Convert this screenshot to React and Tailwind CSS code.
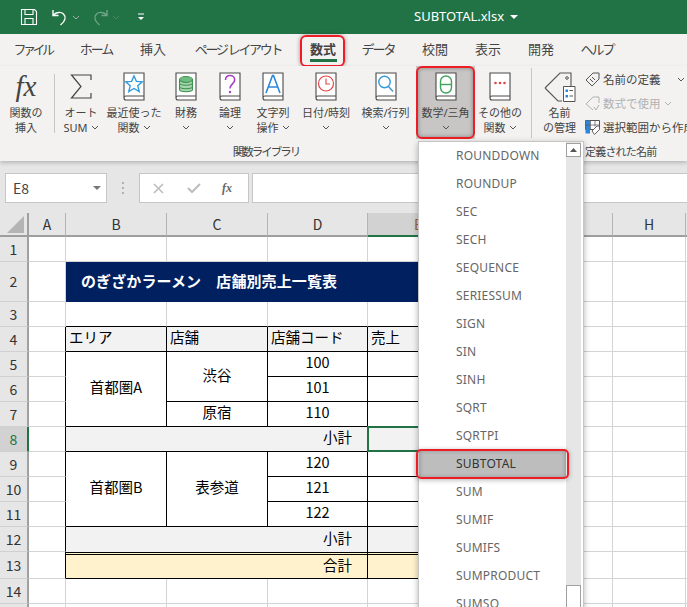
const plain = "border-r border-b border-[#d4d4d4]";
const line = "border-r border-b border-black";
const leftEdge = "border-r border-r-black border-b border-b-[#d4d4d4]";
const topEdge = "border-r border-r-[#d4d4d4] border-b border-b-black";
const jp = "font-['Noto_Sans_CJK_JP',sans-serif]";

const funcs = ["ROUNDDOWN", "ROUNDUP", "SEC", "SECH", "SEQUENCE", "SERIESSUM", "SIGN", "SIN", "SINH", "SQRT", "SQRTPI", "SUBTOTAL", "SUM", "SUMIF", "SUMIFS", "SUMPRODUCT", "SUMSQ"];

function Chevron({ className = "" }) {
    return (
        <svg width="8" height="5" viewBox="0 0 8 5" className={className}>
            <path d="M1 1l3 3 3-3" fill="none" stroke="#555" strokeWidth="1" />
        </svg>
    );
}

function Book({ children }) {
    return (
        <svg width="22" height="29" viewBox="0 0 22 29">
            <path d="M1 26V1h20v27H3a2 2 0 0 1 0-4h18" fill="#fff" stroke="#4a4a4a" strokeWidth="1.1" />
            {children}
        </svg>
    );
}

function RibbonButton({ className = "", icon, lines, chevron }) {
    return (
        <div className={`flex flex-col items-center pt-[6px] h-[73px] shrink-0 text-[11px] leading-[14.5px] text-[#444] ${className}`}>
            <div className="h-[29px] flex items-center justify-center">{icon}</div>
            <div className="mt-[5px] text-center whitespace-nowrap">{lines[0]}</div>
            <div className="flex items-center justify-center h-[14.5px] gap-[3px] whitespace-nowrap">
                {lines[1]}
                {chevron && <Chevron />}
            </div>
        </div>
    );
}

function Tab({ className = "", children }) {
    return <div className={`flex items-center justify-center h-full shrink-0 text-[13px] text-[#444] whitespace-nowrap ${className}`}>{children}</div>;
}

function Cell({ className = plain, children }) {
    return <div className={`flex items-center pb-[3px] text-[14.5px] leading-none text-black whitespace-nowrap ${className}`}>{children}</div>;
}

function ColHead({ active, children }) {
    return (
        <div className={`flex items-center justify-center text-[14px] border-r border-r-[#b4b4b4] border-b-2 ${active ? "bg-[#d2d2d2] text-[#a0622a] border-b-[#217346]" : "bg-[#e6e6e6] text-[#333] border-b-[#9e9e9e]"}`}>
            {children}
        </div>
    );
}

function RowHead({ active, children }) {
    return (
        <div className={`flex items-center justify-center text-[14px] border-b border-b-[#d0d0d0] border-r-2 ${active ? "bg-[#d2d2d2] text-[#217346] border-r-[#217346]" : "bg-[#e6e6e6] text-[#333] border-r-[#a0a0a0]"}`}>
            {children}
        </div>
    );
}

// right of the table only plain gridlines are left
function Rest() {
    return (
        <>
            <Cell />
            <Cell />
            <Cell />
            <Cell />
        </>
    );
}

export default function App() {
    return (
        <div className={`relative w-[687px] h-[607px] overflow-hidden bg-white flex flex-col font-['Noto_Sans','Noto_Sans_CJK_JP',sans-serif]`}>

            {/* title bar */}
            <div className="flex items-center h-[34px] shrink-0 bg-[#217346] text-white">
                <svg width="18" height="18" viewBox="0 0 18 18" className="ml-[20px]">
                    <path d="M1.5 1.5h13l2 2v13h-15z M5 1.5v5h8v-5 M5 16.5v-6h8v6" fill="none" stroke="#fff" strokeWidth="1.1" />
                </svg>
                <svg width="18" height="18" viewBox="0 0 18 18" className="ml-[13px]">
                    <path d="M2 2v5.5h5.5 M2.5 7C5 4 10 3.5 12.5 6c2.8 2.8 2 7-3 11" fill="none" stroke="#fff" strokeWidth="1.4" />
                </svg>
                <Chevron className="ml-[3px] invert" />
                <svg width="18" height="18" viewBox="0 0 18 18" className="ml-[11px] opacity-35">
                    <path d="M16 2v5.5h-5.5 M15.5 7C13 4 8 3.5 5.5 6c-2.8 2.8-2 7 3 11" fill="none" stroke="#fff" strokeWidth="1.4" />
                </svg>
                <Chevron className="ml-[3px] invert opacity-35" />
                <svg width="8" height="8" viewBox="0 0 8 8" className="ml-[17px]">
                    <path d="M1 1h6" stroke="#fff" strokeWidth="1" />
                    <path d="M1 4h6l-3 3z" fill="#fff" />
                </svg>
                <span className="ml-[269px] text-[13px]">SUBTOTAL.xlsx</span>
                <svg width="8" height="5" viewBox="0 0 8 5" className="ml-[6px]">
                    <path d="M0 0h8l-4 4z" fill="#fff" />
                </svg>
            </div>

            {/* tabs */}
            <div className="flex h-[32px] shrink-0 bg-[#f3f2f1]">
                <Tab className="w-[65px] tracking-[-3.5px]">ファイル</Tab>
                <Tab className="w-[62px] tracking-[-2px]">ホーム</Tab>
                <Tab className="w-[52px]">挿入</Tab>
                <Tab className="w-[118px] tracking-[-2.3px]">ページ レイアウト</Tab>
                <Tab className="w-[52px] relative font-bold text-[#333]">
                    数式
                    <div className="absolute left-[13px] top-[25px] w-[27px] h-[3px] bg-[#217346]"></div>
                    <div className="absolute left-[3px] top-px w-[45px] h-[32px] rounded-[6px] border-2 border-[#ee1c25] shadow-[0_0_4px_rgba(0,0,0,0.4)]"></div>
                </Tab>
                <Tab className="w-[58px] tracking-[-2px]">データ</Tab>
                <Tab className="w-[56px]">校閲</Tab>
                <Tab className="w-[50px]">表示</Tab>
                <Tab className="w-[56px]">開発</Tab>
                <Tab className="w-[56px] tracking-[-2px]">ヘルプ</Tab>
            </div>

            {/* ribbon */}
            <div className="flex h-[95px] shrink-0 bg-[#f3f2f1] relative z-10 shadow-[0_2px_4px_rgba(0,0,0,0.2)]">
                <div className="flex flex-col w-[532px] shrink-0">
                    <div className="flex h-[73px]">
                        <RibbonButton
                            className="w-[52px]"
                            icon={<span className="font-['Liberation_Serif',serif] italic text-[29px] leading-none text-[#444]">fx</span>}
                            lines={["関数の", "挿入"]}
                        />
                        <div className="ml-[2px] mt-[8px] w-px h-[59px] bg-[#c8c6c4]"></div>
                        <RibbonButton
                            className="w-[52px]"
                            icon={
                                <svg width="22" height="25" viewBox="0 0 22 25">
                                    <path d="M21 6V1H1.5l9.5 11.5L1.5 24H21v-5" fill="none" stroke="#444" strokeWidth="1.2" />
                                </svg>
                            }
                            lines={["オート", "SUM"]}
                            chevron
                        />
                        <RibbonButton
                            className="w-[54px]"
                            icon={
                                <Book>
                                    <path d="M11 4l2.4 5.4 5.9.5-4.5 3.9 1.4 5.8L11 16.5l-5.2 3.1 1.4-5.8-4.5-3.9 5.9-.5z" fill="none" stroke="#2f9bdc" strokeWidth="1.4" />
                                </Book>
                            }
                            lines={["最近使った", "関数"]}
                            chevron
                        />
                        <RibbonButton
                            className="w-[50px]"
                            icon={
                                <Book>
                                    <path d="M4.5 7.5v10c0 3 13 3 13 0v-10" fill="#a8d5b0" stroke="#3d9350" strokeWidth="1.1" />
                                    <ellipse cx="11" cy="7.5" rx="6.5" ry="3" fill="#6fbb80" stroke="#3d9350" strokeWidth="1.1" />
                                    <path d="M4.5 11c0 3 13 3 13 0 M4.5 14.5c0 3 13 3 13 0" fill="none" stroke="#3d9350" strokeWidth="1.1" />
                                </Book>
                            }
                            lines={["財務", ""]}
                            chevron
                        />
                        <RibbonButton
                            className="w-[38px]"
                            icon={
                                <Book>
                                    <path d="M6.5 8c0-3 2-4.5 4.5-4.5s4.7 1.7 4.7 4.2c0 4-4.7 4.3-4.7 8.8" fill="none" stroke="#a63fc4" strokeWidth="1.6" />
                                    <circle cx="11" cy="20" r="1.2" fill="#a63fc4" />
                                </Book>
                            }
                            lines={["論理", ""]}
                            chevron
                        />
                        <RibbonButton
                            className="w-[48px]"
                            icon={
                                <Book>
                                    <path d="M4 21L10.5 3.5h1L18 21 M6.2 15h9.6" fill="none" stroke="#2b88d8" strokeWidth="1.6" />
                                </Book>
                            }
                            lines={["文字列", "操作"]}
                            chevron
                        />
                        <RibbonButton
                            className="w-[58px]"
                            icon={
                                <Book>
                                    <circle cx="11" cy="11.5" r="7.5" fill="#fff" stroke="#e64545" strokeWidth="1.2" />
                                    <path d="M11 6.5V12h4" fill="none" stroke="#d84a4a" strokeWidth="1.1" />
                                </Book>
                            }
                            lines={["日付/時刻", ""]}
                            chevron
                        />
                        <RibbonButton
                            className="w-[61px]"
                            icon={
                                <Book>
                                    <circle cx="9.5" cy="10" r="5.7" fill="none" stroke="#2f9bdc" strokeWidth="1.4" />
                                    <path d="M13.5 14.5l4.5 5" fill="none" stroke="#4d94c4" strokeWidth="1.5" />
                                </Book>
                            }
                            lines={["検索/行列", ""]}
                            chevron
                        />
                        <div className="relative">
                            <RibbonButton
                                className="w-[59px] bg-[#c8c6c4]"
                                icon={
                                    <Book>
                                        <rect x="5.5" y="4" width="11" height="17" rx="5.5" fill="none" stroke="#3fa35c" strokeWidth="1.4" />
                                        <path d="M5.5 12.5h11" fill="none" stroke="#3fa35c" strokeWidth="1.4" />
                                    </Book>
                                }
                                lines={["数学/三角", ""]}
                                chevron
                            />
                            <div className="absolute inset-0 rounded-[6px] border-2 border-[#ee1c25] shadow-[inset_0_0_4px_rgba(0,0,0,0.35)]"></div>
                        </div>
                        <RibbonButton
                            className="w-[50px]"
                            icon={
                                <Book>
                                    <circle cx="6.5" cy="11" r="1.3" fill="#e64545" />
                                    <circle cx="11" cy="11" r="1.3" fill="#e64545" />
                                    <circle cx="15.5" cy="11" r="1.3" fill="#e64545" />
                                </Book>
                            }
                            lines={["その他の", "関数"]}
                            chevron
                        />
                        <div className="ml-[6px] mt-[2px] w-px h-[70px] bg-[#c8c6c4]"></div>
                    </div>
                    <div className="text-center text-[11.5px] leading-[26px] tracking-[-2px] text-[#444]">関数ライブラリ</div>
                </div>

                <div className="flex flex-col">
                    <div className="flex h-[73px]">
                        <RibbonButton
                            className="w-[51px] ml-[2px]"
                            icon={
                                <svg width="32" height="30" viewBox="0 0 32 30">
                                    <path d="M1 16L16 1h11v13 M18 29h-4L1 16" fill="none" stroke="#555" strokeWidth="1.1" />
                                    <circle cx="23" cy="6" r="1.3" fill="none" stroke="#555" />
                                    <path d="M19.5 14.5H31v15H19.5z" fill="#fff" stroke="#555" />
                                    <path d="M21.5 17.5H24V20h-2.5z M21.5 23H24v2.5h-2.5z" fill="#2b88d8" />
                                    <path d="M25.5 18.5h3.5 M25.5 24h3.5" stroke="#555" />
                                </svg>
                            }
                            lines={["名前", "の管理"]}
                        />
                        <div className="flex flex-col pt-[2px] text-[11.5px] text-[#444] whitespace-nowrap">
                            <div className="flex items-center h-[24px] gap-[3px]">
                                <svg width="15" height="15" viewBox="0 0 15 15">
                                    <path d="M1 8l7-7h6v6l-7 7z M5 7l3 3 M7 5l3 3" fill="none" stroke="#555" strokeWidth="1" />
                                </svg>
                                名前の定義
                                <Chevron className="ml-[13px]" />
                            </div>
                            <div className="flex items-center h-[24px] gap-[3px] text-[#b1b1b1]">
                                <svg width="15" height="15" viewBox="0 0 15 15">
                                    <path d="M1 8l7-7h6v6M8 14l-7-6" fill="none" stroke="#b1b1b1" strokeWidth="1" />
                                    <path d="M9 11l2 3 3-5" fill="none" stroke="#b1b1b1" strokeWidth="1" />
                                </svg>
                                数式で使用
                                <Chevron className="opacity-40" />
                            </div>
                            <div className="flex items-center h-[24px] gap-[3px]">
                                <svg width="15" height="15" viewBox="0 0 15 15">
                                    <path d="M.5.5h14v9H.5z" fill="#fff" stroke="#555" />
                                    <path d="M.5.5h4.5v13H.5z" fill="#2b88d8" />
                                    <path d="M.5 5h14 M5.5.5v9 M10 .5v6" fill="none" stroke="#555" strokeWidth="0.7" />
                                    <path d="M7 11l5-5h2.5v3.5l-5 5z" fill="#fff" stroke="#555" strokeWidth="0.9" />
                                </svg>
                                選択範囲から作成
                            </div>
                        </div>
                    </div>
                    <div className="ml-[53px] text-[11px] leading-[26px] whitespace-nowrap tracking-[-0.8px] text-[#444]">定義された名前</div>
                </div>
            </div>

            {/* formula bar */}
            <div className={`flex items-start pt-[12px] h-[52px] shrink-0 bg-[#e6e6e6] ${jp}`}>
                <div className="flex items-center justify-between ml-[5px] w-[102px] h-[30px] bg-white border border-[#c6c6c6] pl-[7px] pr-[5px] text-[14px] text-[#444]">
                    E8
                    <svg width="8" height="5" viewBox="0 0 8 5">
                        <path d="M0 0h8l-4 4z" fill="#777" />
                    </svg>
                </div>
                <svg width="4" height="12" viewBox="0 0 4 12" className="ml-[14px] mt-[9px]">
                    <path d="M1 0h2v2H1z M1 5h2v2H1z M1 10h2v2H1z" fill="#b1b1b1" />
                </svg>
                <div className="flex items-center ml-[14px] w-[110px] h-[30px] bg-white border border-[#c6c6c6]">
                    <svg width="11" height="11" viewBox="0 0 11 11" className="ml-[13px]">
                        <path d="M1 1l9 9 M10 1l-9 9" stroke="#bdbdbd" strokeWidth="1.6" />
                    </svg>
                    <svg width="14" height="11" viewBox="0 0 14 11" className="ml-[23px]">
                        <path d="M1 5l4 4 8-8" fill="none" stroke="#bdbdbd" strokeWidth="2" />
                    </svg>
                    <span className="ml-[21px] font-['Liberation_Serif',serif] italic font-bold text-[12px] text-[#666]">fx</span>
                </div>
                <div className="ml-[3px] flex-1 h-[30px] bg-white border-y border-l border-[#c6c6c6]"></div>
            </div>

            {/* sheet */}
            <div className={`grid flex-1 grid-cols-[29px_37px_101px_101px_100px_101px_44px_100px_73px_20px] grid-rows-[24px_25px_40px_25px_25px_25px_25px_25px_25px_25px_25px_25px_25px_27px_25px_25px] ${jp}`}>
                <div className="relative bg-[#e6e6e6] border-r-2 border-r-[#a0a0a0] border-b-2 border-b-[#9e9e9e]">
                    <svg width="18" height="18" viewBox="0 0 18 18" className="absolute left-[7px] top-[3px]">
                        <path d="M17 0v17H0z" fill="#b4b4b4" />
                    </svg>
                </div>
                <ColHead>A</ColHead>
                <ColHead>B</ColHead>
                <ColHead>C</ColHead>
                <ColHead>D</ColHead>
                <ColHead active>E</ColHead>
                <ColHead>F</ColHead>
                <ColHead>G</ColHead>
                <ColHead>H</ColHead>
                <ColHead />

                <RowHead>1</RowHead>
                <Cell /><Cell /><Cell /><Cell /><Cell /><Rest />

                <RowHead>2</RowHead>
                <Cell />
                <Cell className="col-span-4 bg-[#002060] pl-[15px] pb-[4px] text-white font-bold text-[15px] tracking-[0.1px]">のぎざかラーメン　店舗別売上一覧表</Cell>
                <Rest />

                <RowHead>3</RowHead>
                <Cell className={plain} />
                <Cell className={topEdge} /><Cell className={topEdge} /><Cell className={topEdge} /><Cell className={topEdge} /><Rest />

                <RowHead>4</RowHead>
                <Cell className={leftEdge} />
                <Cell className={`${line} bg-[#f2f2f2] pl-[3px]`}>エリア</Cell>
                <Cell className={`${line} bg-[#f2f2f2] pl-[3px]`}>店舗</Cell>
                <Cell className={`${line} bg-[#f2f2f2] pl-[3px]`}>店舗コード</Cell>
                <Cell className={`${line} bg-[#f2f2f2] pl-[3px]`}>売上</Cell>
                <Rest />

                <RowHead>5</RowHead>
                <Cell className={leftEdge} />
                <Cell className={`${line} row-span-3 justify-center`}>首都圏A</Cell>
                <Cell className={`${line} row-span-2 justify-center`}>渋谷</Cell>
                <Cell className={`${line} justify-center`}>100</Cell>
                <Cell className={line} />
                <Rest />

                <RowHead>6</RowHead>
                <Cell className={leftEdge} />
                <Cell className={`${line} justify-center`}>101</Cell>
                <Cell className={line} />
                <Rest />

                <RowHead>7</RowHead>
                <Cell className={leftEdge} />
                <Cell className={`${line} justify-center`}>原宿</Cell>
                <Cell className={`${line} justify-center`}>110</Cell>
                <Cell className={line} />
                <Rest />

                <RowHead active>8</RowHead>
                <Cell className={leftEdge} />
                <Cell className={`${line} col-span-3 justify-end bg-[#f2f2f2] pr-[15px]`}>小計</Cell>
                <Cell className={`${line} relative bg-[#f2f2f2]`}>
                    <div className="absolute -left-px -top-px -right-px -bottom-px border-2 border-[#217346]"></div>
                </Cell>
                <Rest />

                <RowHead>9</RowHead>
                <Cell className={leftEdge} />
                <Cell className={`${line} row-span-3 justify-center`}>首都圏B</Cell>
                <Cell className={`${line} row-span-3 justify-center`}>表参道</Cell>
                <Cell className={`${line} justify-center`}>120</Cell>
                <Cell className={line} />
                <Rest />

                <RowHead>10</RowHead>
                <Cell className={leftEdge} />
                <Cell className={`${line} justify-center`}>121</Cell>
                <Cell className={line} />
                <Rest />

                <RowHead>11</RowHead>
                <Cell className={leftEdge} />
                <Cell className={`${line} justify-center`}>122</Cell>
                <Cell className={line} />
                <Rest />

                <RowHead>12</RowHead>
                <Cell className={leftEdge} />
                <Cell className="col-span-3 justify-end border-r border-black bg-[#f2f2f2] pr-[15px]">小計</Cell>
                <Cell className="border-r border-black bg-[#f2f2f2]" />
                <Rest />

                <RowHead>13</RowHead>
                <Cell className={leftEdge} />
                <Cell className="col-span-3 justify-end border-r border-b border-black border-t-[3px] border-t-black [border-top-style:double] bg-[#fff2cc] pr-[15px]">合計</Cell>
                <Cell className="border-r border-b border-black border-t-[3px] border-t-black [border-top-style:double] bg-[#fff2cc]" />
                <Rest />

                <RowHead>14</RowHead>
                <Cell /><Cell /><Cell /><Cell /><Cell /><Rest />

                <RowHead />
                <Cell /><Cell /><Cell /><Cell /><Cell /><Rest />
            </div>

            {/* function list dropdown */}
            <div className="absolute z-20 left-[418px] top-[141px] w-[166px] h-[480px] flex bg-white border border-[#c6c6c6] shadow-[0_2px_6px_rgba(0,0,0,0.3)]">
                <div className="flex-1 flex flex-col">
                    {funcs.map((name) => (
                        <div
                            key={name}
                            className={`relative flex items-center h-[28px] shrink-0 pl-[37px] text-[12px] tracking-[0.2px] ${name === "SUBTOTAL" ? "bg-[#bdbdbd] text-[#333] shadow-[inset_0_0_5px_rgba(0,0,0,0.3)]" : "text-[#666]"}`}
                        >
                            {name}
                            {name === "SUBTOTAL" && (
                                <div className="absolute -left-[3px] -right-[3px] -top-px -bottom-px rounded-[5px] border-2 border-[#ee1c25] shadow-[0_1px_5px_rgba(0,0,0,0.3)]"></div>
                            )}
                        </div>
                    ))}
                </div>
                <div className="w-[15px] mr-[2px] shrink-0 flex flex-col bg-[#e6e6e6]">
                    <div className="flex items-center justify-center h-[14px] mt-px bg-white border border-[#a0a0a0]">
                        <svg width="7" height="4" viewBox="0 0 7 4">
                            <path d="M0 4h7L3.5 0z" fill="#555" />
                        </svg>
                    </div>
                    <div className="h-[428px] shrink-0"></div>
                    <div className="flex-1 bg-white border border-[#a0a0a0]"></div>
                </div>
            </div>
        </div>
    );
}
